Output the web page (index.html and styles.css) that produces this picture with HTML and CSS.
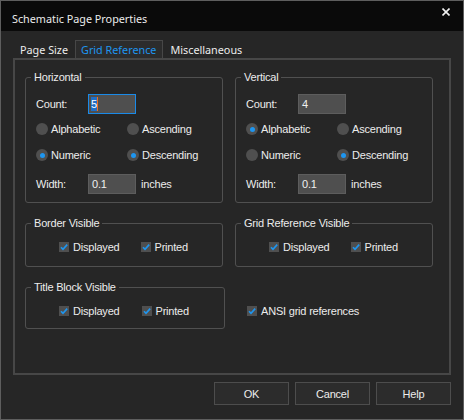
FILE: index.html
```html
<!DOCTYPE html>
<html>
<head>
<meta charset="utf-8">
<link rel="stylesheet" href="styles.css">
</head>
<body>
<div class="window">
  <div class="titlebar">
    <span class="title">Schematic Page Properties</span>
    <svg class="close" width="8" height="8" viewBox="0 0 8 8"><path d="M0.5 0.5 L7.5 7.5 M7.5 0.5 L0.5 7.5" stroke="#f2f2f2" stroke-width="1.6" fill="none"/></svg>
  </div>
  <div class="tabs">
    <div class="tab">Page Size</div>
    <div class="tab active">Grid Reference</div>
    <div class="tab">Miscellaneous</div>
  </div>
  <div class="panel">
    <div class="grid">
      <fieldset class="group">
        <legend>Horizontal</legend>
        <div class="axis-body">
          <div class="row"><span class="lbl">Count:</span><span class="input focus"><span class="sel">5</span></span></div>
          <div class="row r1"><span class="opt"><span class="radio"></span>Alphabetic</span><span class="opt"><span class="radio"></span>Ascending</span></div>
          <div class="row r2"><span class="opt"><span class="radio on"></span>Numeric</span><span class="opt"><span class="radio on"></span>Descending</span></div>
          <div class="row r3"><span class="lbl">Width:</span><span class="input">0.1</span><span class="unit">inches</span></div>
        </div>
      </fieldset>
      <fieldset class="group">
        <legend>Vertical</legend>
        <div class="axis-body">
          <div class="row"><span class="lbl">Count:</span><span class="input">4</span></div>
          <div class="row r1"><span class="opt"><span class="radio on"></span>Alphabetic</span><span class="opt"><span class="radio"></span>Ascending</span></div>
          <div class="row r2"><span class="opt"><span class="radio"></span>Numeric</span><span class="opt"><span class="radio on"></span>Descending</span></div>
          <div class="row r3"><span class="lbl">Width:</span><span class="input">0.1</span><span class="unit">inches</span></div>
        </div>
      </fieldset>
      <fieldset class="group">
        <legend>Border Visible</legend>
        <div class="check-body">
          <span class="chk"><span class="box"><svg width="10" height="10" viewBox="0 0 10 10"><polyline points="2,5.2 4,7.4 8.2,2.6" fill="none" stroke="#1e96f0" stroke-width="1.6"/></svg></span>Displayed</span>
          <span class="chk"><span class="box"><svg width="10" height="10" viewBox="0 0 10 10"><polyline points="2,5.2 4,7.4 8.2,2.6" fill="none" stroke="#1e96f0" stroke-width="1.6"/></svg></span>Printed</span>
        </div>
      </fieldset>
      <fieldset class="group">
        <legend>Grid Reference Visible</legend>
        <div class="check-body">
          <span class="chk"><span class="box"><svg width="10" height="10" viewBox="0 0 10 10"><polyline points="2,5.2 4,7.4 8.2,2.6" fill="none" stroke="#1e96f0" stroke-width="1.6"/></svg></span>Displayed</span>
          <span class="chk"><span class="box"><svg width="10" height="10" viewBox="0 0 10 10"><polyline points="2,5.2 4,7.4 8.2,2.6" fill="none" stroke="#1e96f0" stroke-width="1.6"/></svg></span>Printed</span>
        </div>
      </fieldset>
      <fieldset class="group wide">
        <legend>Title Block Visible</legend>
        <div class="check-body last">
          <span class="chk"><span class="box"><svg width="10" height="10" viewBox="0 0 10 10"><polyline points="2,5.2 4,7.4 8.2,2.6" fill="none" stroke="#1e96f0" stroke-width="1.6"/></svg></span>Displayed</span>
          <span class="chk"><span class="box"><svg width="10" height="10" viewBox="0 0 10 10"><polyline points="2,5.2 4,7.4 8.2,2.6" fill="none" stroke="#1e96f0" stroke-width="1.6"/></svg></span>Printed</span>
        </div>
      </fieldset>
      <div class="ansi">
        <span class="chk"><span class="box"><svg width="10" height="10" viewBox="0 0 10 10"><polyline points="2,5.2 4,7.4 8.2,2.6" fill="none" stroke="#1e96f0" stroke-width="1.6"/></svg></span>ANSI grid references</span>
      </div>
    </div>
  </div>
  <div class="buttons">
    <button class="btn">OK</button>
    <button class="btn">Cancel</button>
    <button class="btn">Help</button>
  </div>
</div>
</body>
</html>
```
FILE: styles.css
```css
html, body {
  margin: 0;
  padding: 0;
  background: #262626;
}
.window {
  box-sizing: border-box;
  width: 464px;
  height: 420px;
  border: 1px solid #5e5e5e;
  background: #262626;
  color: #ececec;
  font-family: "Liberation Sans", Arial, sans-serif;
  font-size: 11px;
  letter-spacing: -0.2px;
}
.titlebar {
  height: 30px;
  background: #0a0a0a;
  display: flex;
  align-items: center;
  justify-content: space-between;
  padding: 0 13px 0 11px;
}
.title {
  font-family: "Noto Sans", sans-serif;
  font-size: 10.8px;
  letter-spacing: 0;
  color: #ececec;
  margin-top: 5px;
}
.close {
  margin-top: -9px;
}
.tabs {
  display: flex;
  margin: 9px 0 0 12px;
  height: 18px;
}
.tab {
  box-sizing: border-box;
  height: 18px;
  line-height: 17px;
  padding: 0 6px;
  border: 1px solid transparent;
  border-bottom: none;
  font-family: "Noto Sans", sans-serif;
  font-size: 10.8px;
  letter-spacing: 0;
  color: #ececec;
}
.tab.active {
  background: #2c2c2c;
  border-color: #474747;
  color: #1e96f0;
  padding: 0 6px 0 5px;
}
.panel {
  box-sizing: border-box;
  margin: 0 12px;
  height: 317px;
  border: 2px solid #474747;
  padding: 11px 17px 0 10px;
}
.grid {
  display: grid;
  grid-template-columns: 198px 198px;
  column-gap: 12px;
  row-gap: 14px;
}
.group {
  margin: 0;
  padding: 0;
  min-width: 0;
  border: 1px solid #505050;
  border-radius: 3px;
}
.group.wide {
  margin-right: -2px;
}
legend {
  margin-left: 5px;
  padding: 0 3px;
  line-height: 12px;
  font-size: 11px;
}
.axis-body {
  padding: 11px 0 8px 10px;
}
.row {
  display: flex;
  align-items: center;
  height: 20px;
}
.r1 { margin-top: 5px; }
.r2 { margin-top: 6px; }
.r3 { margin-top: 9px; }
.lbl {
  width: 52px;
}
.input {
  box-sizing: border-box;
  width: 48px;
  height: 20px;
  background: #4f4f4f;
  border: 1px solid #5d5d5d;
  padding: 0 0 0 3px;
  line-height: 18px;
  color: #f0f0f0;
}
.input.focus {
  border-color: #1a8ae8;
  padding-left: 2px;
}
.sel {
  display: inline-block;
  background: #1f6fc8;
  color: #ffffff;
  line-height: 14px;
  border-right: 1px solid #f07020;
}
.unit {
  margin-left: 5px;
}
.opt {
  display: flex;
  align-items: center;
  width: 91px;
}
.radio {
  box-sizing: border-box;
  width: 12px;
  height: 12px;
  border-radius: 50%;
  background: #4f4f4f;
  margin-right: 3px;
  display: flex;
  align-items: center;
  justify-content: center;
}
.radio.on::after {
  content: "";
  width: 5px;
  height: 5px;
  border-radius: 50%;
  background: #1e96f0;
}
.check-body {
  display: flex;
  padding: 8px 0 9px 33px;
}
.check-body.last {
  padding-bottom: 7px;
}
.chk {
  display: flex;
  align-items: center;
  height: 20px;
  width: 93px;
}
.box {
  width: 10px;
  height: 10px;
  background: #4f4f4f;
  margin-right: 4px;
  display: flex;
}
.ansi {
  padding: 20px 0 0 12px;
}
.ansi .chk {
  width: auto;
}
.buttons {
  display: flex;
  justify-content: flex-end;
  gap: 6px;
  margin: 7px 12px 0 0;
}
.btn {
  box-sizing: border-box;
  width: 75px;
  height: 23px;
  background: #2c2c2c;
  border: 1px solid #4d4d4d;
  color: #ececec;
  font-family: "Liberation Sans", Arial, sans-serif;
  font-size: 11px;
  letter-spacing: -0.2px;
  padding: 0;
}
```
